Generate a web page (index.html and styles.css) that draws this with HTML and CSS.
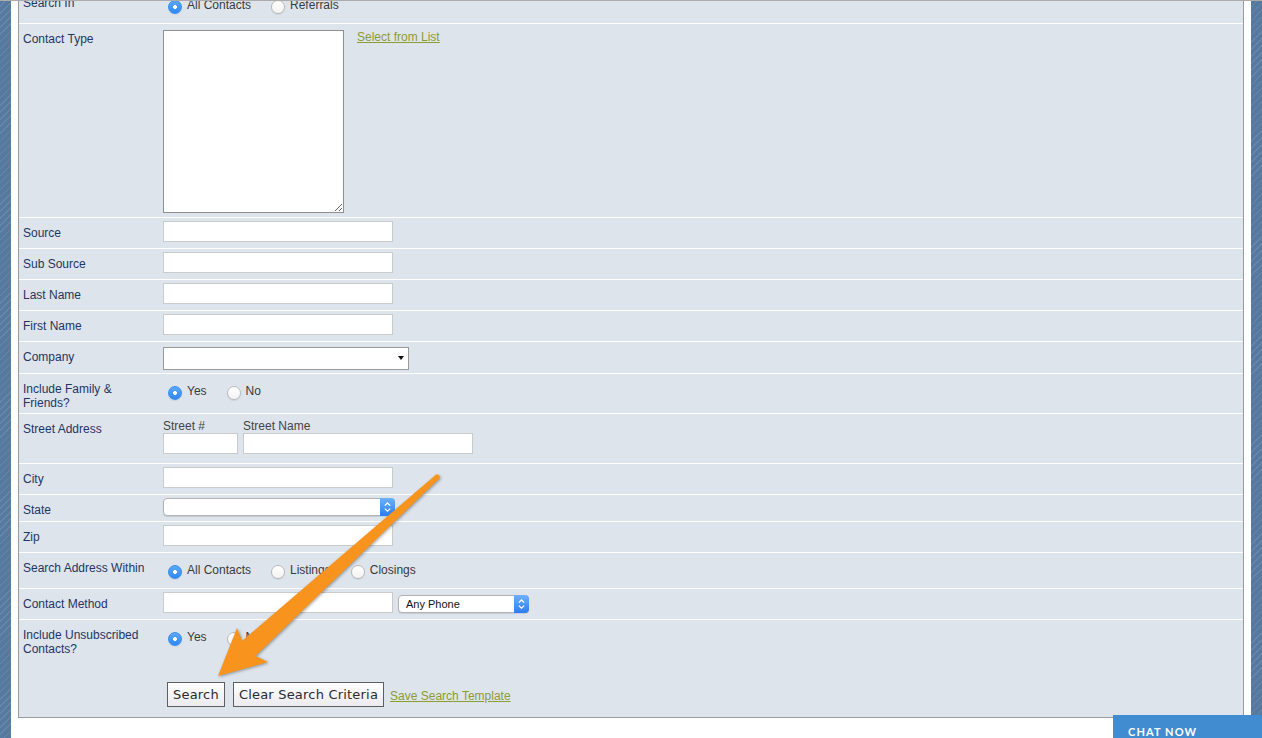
FILE: index.html
```html
<!DOCTYPE html>
<html>
<head>
    <title>Contact Search</title>
    <link rel="stylesheet" href="styles.css">
</head>
<body>

<div class="page">
  <form class="search-box" action="#" method="get">

    <div class="row radio-row">
      <div class="lbl">Search In</div>
      <div class="fld opts">
        <label class="opt"><input type="radio" name="searchin" checked><span>All Contacts</span></label>
        <label class="opt"><input type="radio" name="searchin"><span>Referrals</span></label>
      </div>
    </div>

    <div class="row">
      <div class="lbl">Contact Type</div>
      <div class="fld area-fld">
        <textarea class="area"></textarea>
        <a href="#" class="link">Select from List</a>
      </div>
    </div>

    <div class="row">
      <div class="lbl">Source</div>
      <div class="fld"><input class="txt" type="text"></div>
    </div>

    <div class="row">
      <div class="lbl">Sub Source</div>
      <div class="fld"><input class="txt" type="text"></div>
    </div>

    <div class="row">
      <div class="lbl">Last Name</div>
      <div class="fld"><input class="txt" type="text"></div>
    </div>

    <div class="row">
      <div class="lbl">First Name</div>
      <div class="fld"><input class="txt" type="text"></div>
    </div>

    <div class="row company-row">
      <div class="lbl">Company</div>
      <div class="fld company-fld">
        <div class="sel-box">
          <select class="sel-plain"><option></option></select>
        </div>
      </div>
    </div>

    <div class="row two-line">
      <div class="lbl">Include Family &amp;<br>Friends?</div>
      <div class="fld opts">
        <label class="opt"><input type="radio" name="family" checked><span>Yes</span></label>
        <label class="opt"><input type="radio" name="family"><span>No</span></label>
      </div>
    </div>

    <div class="row street-row">
      <div class="lbl">Street Address</div>
      <div class="fld street-fld">
        <div class="street-col">
          <span class="sub-lbl">Street #</span>
          <input class="txt num" type="text">
        </div>
        <div class="street-col">
          <span class="sub-lbl">Street Name</span>
          <input class="txt" type="text">
        </div>
      </div>
    </div>

    <div class="row">
      <div class="lbl">City</div>
      <div class="fld"><input class="txt" type="text"></div>
    </div>

    <div class="row state-row">
      <div class="lbl">State</div>
      <div class="fld">
        <div class="mac-sel state-sel">
          <select><option></option></select>
          <span class="spin"><svg width="15" height="18" viewBox="0 0 15 18"><path d="M4.8 7.6 L7.5 5 L10.2 7.6 M4.8 10.6 L7.5 13.2 L10.2 10.6" fill="none" stroke="#fff" stroke-width="1.3"/></svg></span>
        </div>
      </div>
    </div>

    <div class="row">
      <div class="lbl">Zip</div>
      <div class="fld"><input class="txt" type="text"></div>
    </div>

    <div class="row radio-row">
      <div class="lbl">Search Address Within</div>
      <div class="fld opts">
        <label class="opt"><input type="radio" name="within" checked><span>All Contacts</span></label>
        <label class="opt"><input type="radio" name="within"><span>Listings</span></label>
        <label class="opt"><input type="radio" name="within"><span>Closings</span></label>
      </div>
    </div>

    <div class="row">
      <div class="lbl">Contact Method</div>
      <div class="fld inline">
        <input class="txt" type="text">
        <div class="mac-sel phone-sel">
          <select><option>Any Phone</option></select>
          <span class="spin"><svg width="15" height="18" viewBox="0 0 15 18"><path d="M4.8 7.6 L7.5 5 L10.2 7.6 M4.8 10.6 L7.5 13.2 L10.2 10.6" fill="none" stroke="#fff" stroke-width="1.3"/></svg></span>
        </div>
      </div>
    </div>

    <div class="row last-row">
      <div class="lbl">Include Unsubscribed<br>Contacts?</div>
      <div class="fld opts">
        <label class="opt"><input type="radio" name="unsub" checked><span>Yes</span></label>
        <label class="opt"><input type="radio" name="unsub"><span>No</span></label>
      </div>
    </div>

    <div class="actions">
      <button type="submit" class="btn">Search</button>
      <button type="reset" class="btn">Clear Search Criteria</button>
      <a href="#" class="link">Save Search Template</a>
    </div>

  </form>
</div>

<!-- annotation arrow pointing at the Search button -->
<svg class="arrow" width="1262" height="738" viewBox="0 0 1262 738">
  <g class="arrow-shape">
    <circle cx="437" cy="477" r="2.6"/>
    <polygon points="438.7,478.9 255.5,656 268,662 218,676 237,628 242,641 435.3,475.2"/>
  </g>
</svg>

<div class="chat">CHAT NOW</div>

</body>
</html>
```

FILE: styles.css
```css
body {
  margin: 0;
  border-top: 1px solid #acacac;
  background: repeating-linear-gradient(135deg, #56799f 0 4px, #6886ab 4px 5px);
  font-family: "Liberation Sans", Arial, sans-serif;
  font-size: 12px;
}

.page {
  margin: 0 11px;
  padding: 0 7px;
  background-color: #fff;
  min-height: 737px;
  overflow: hidden;
}

.search-box {
  margin-top: -14px;
  background-color: #dde4ec;
  border: 1px solid #9b9b9b;
}

.row {
  display: grid;
  grid-template-columns: 144px 1fr;
  min-height: 30px;
  border-bottom: 1px solid #fff;
}

.lbl {
  padding: 8px 4px 0;
  color: #1f3562;
  line-height: 14px;
}

.fld {
  padding-top: 3px;
}

.radio-row {
  min-height: 35px;
}

.two-line {
  min-height: 39px;
}

.company-row {
  min-height: 31px;
}

.street-row {
  min-height: 49px;
}

.state-row {
  min-height: 26px;
}

.last-row {
  border-bottom: 0;
  min-height: 36px;
}

/* inputs */

.txt {
  display: block;
  box-sizing: border-box;
  width: 230px;
  height: 21px;
  margin: 0;
  border: 1px solid #c8cacc;
  background-color: #fff;
  outline: 0;
}

.txt.num {
  width: 75px;
}

.area-fld {
  display: flex;
  align-items: flex-start;
  padding: 6px 0 4px;
}

.area {
  display: block;
  box-sizing: border-box;
  width: 181px;
  height: 183px;
  margin: 0;
  border: 1px solid #8f8f8f;
  background-color: #fff;
}

.area-fld .link {
  margin-left: 13px;
}

.link {
  color: #8d9c32;
  line-height: 14px;
  text-decoration: underline;
}

/* radios */

.opts {
  display: flex;
  align-items: flex-start;
  padding-top: 10px;
}

.opt {
  display: flex;
  align-items: flex-start;
  margin-right: 15px;
  color: #3a3a3a;
  line-height: 14px;
}

.opt input {
  appearance: none;
  -webkit-appearance: none;
  box-sizing: border-box;
  width: 14px;
  height: 14px;
  margin: 2px 5px 0;
  border: 1px solid #b9b9b9;
  border-radius: 50%;
  background: linear-gradient(#fff, #f3f3f3);
  box-shadow: 0 1px 1px rgba(0, 0, 0, 0.08);
}

.opt input:checked {
  border-color: #3a8ef0;
  background: radial-gradient(circle, #fff 0 1.6px, transparent 2.2px), linear-gradient(#5ca8fb, #2f88f0);
}

/* street */

.street-fld {
  display: flex;
  gap: 5px;
  padding-top: 5px;
}

.sub-lbl {
  display: block;
  color: #444;
  line-height: 14px;
}

/* selects */

.company-fld {
  padding-top: 5px;
}

.sel-box {
  position: relative;
  width: 246px;
}

.sel-plain {
  appearance: none;
  -webkit-appearance: none;
  display: block;
  box-sizing: border-box;
  width: 100%;
  height: 23px;
  margin: 0;
  border: 1px solid #9a9a9a;
  border-radius: 0;
  background-color: #fff;
}

.sel-box::after {
  content: "";
  position: absolute;
  right: 5px;
  top: 9px;
  border-left: 3px solid transparent;
  border-right: 3px solid transparent;
  border-top: 4px solid #111;
}

.mac-sel {
  position: relative;
  height: 18px;
}

.mac-sel select {
  appearance: none;
  -webkit-appearance: none;
  display: block;
  box-sizing: border-box;
  width: 100%;
  height: 18px;
  margin: 0;
  padding: 0 0 0 7px;
  border: 1px solid #b3b3b3;
  border-radius: 4px;
  background-color: #fff;
  box-shadow: 0 1px 1px rgba(0, 0, 0, 0.1);
  font-family: "Liberation Sans", Arial, sans-serif;
  font-size: 11px;
  color: #111;
}

.mac-sel .spin {
  position: absolute;
  right: 0;
  top: 0;
  width: 15px;
  height: 18px;
  border-radius: 0 4px 4px 0;
  background: linear-gradient(#6cb1fb, #2a7ef0);
}

.mac-sel .spin svg {
  display: block;
}

.state-sel {
  width: 232px;
}

.inline {
  display: flex;
  align-items: flex-start;
}

.phone-sel {
  width: 131px;
  margin: 3px 0 0 5px;
}

/* buttons */

.actions {
  display: flex;
  align-items: center;
  padding: 26px 0 10px 148px;
}

.btn {
  box-sizing: border-box;
  height: 25px;
  margin: 0 8px 0 0;
  padding: 0 5px;
  border: 1px solid #5e5e5e;
  border-radius: 0;
  background: linear-gradient(#fff, #ebebf0);
  color: #2b2b2b;
  font-family: "DejaVu Sans", sans-serif;
  font-size: 13px;
  letter-spacing: 0.2px;
}

.actions .link {
  margin-left: -2px;
  padding-top: 3px;
}

/* overlays */

.arrow {
  position: absolute;
  left: 0;
  top: 0;
  pointer-events: none;
}

.arrow-shape {
  fill: #f8941d;
  filter: drop-shadow(1px 1px 1.5px rgba(0, 0, 0, 0.35));
}

.chat {
  position: fixed;
  right: 0;
  bottom: 0;
  box-sizing: border-box;
  width: 149px;
  height: 23px;
  padding: 10px 0 0 15px;
  background-color: #418bd1;
  color: #fff;
  font-family: Lato, "Open Sans", sans-serif;
  font-weight: 700;
  font-size: 11px;
  line-height: 14px;
  letter-spacing: 1.1px;
}
```
